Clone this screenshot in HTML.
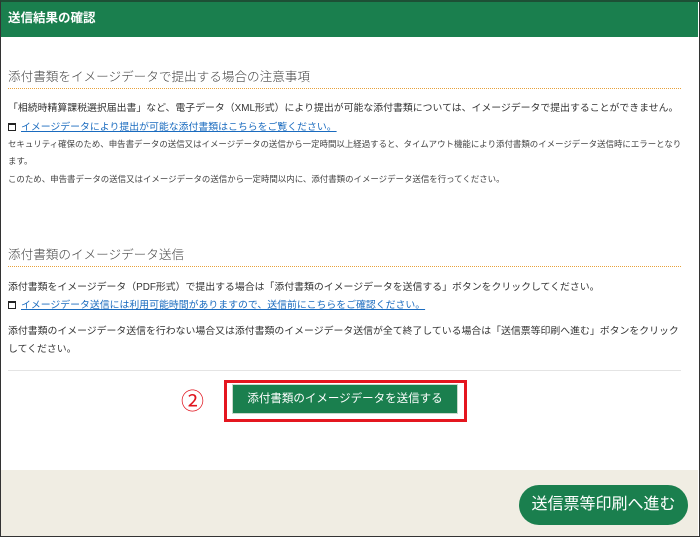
<!DOCTYPE html>
<html><head><meta charset="utf-8"><style>
*{margin:0;padding:0;box-sizing:border-box}
body{width:700px;height:537px;overflow:hidden;background:#fff;font-family:"Liberation Sans","Noto Sans CJK JP",sans-serif;color:#333;position:relative}
.frame{position:absolute;left:0;top:0;width:700px;height:537px;border:1px solid #333;border-top:2px solid #1d4f35}
.hdr{position:absolute;left:1px;top:2px;width:697px;height:35px;background:#1a7f4e;color:#fff;font-weight:bold;font-size:12.5px;line-height:33px;padding-left:7px}
.a{position:absolute;left:8px;white-space:nowrap}
.h{font-size:12.6px;color:#444;font-weight:300}
.dot{position:absolute;left:8px;width:673px;border-top:1px dotted #e8a13a}
.t{font-size:9.9px}
.s{font-size:8.45px;color:#444}
.lk{color:#1a6bbf;text-decoration:underline}
.ic{display:inline-block;width:8px;height:8px;border:1px solid #222;border-top-width:2px;margin-right:5px;vertical-align:-1px}
.bot{position:absolute;left:1px;top:470px;width:697px;height:66px;background:#f0ede3}
</style></head><body>
<div class="hdr">送信結果の確認</div>
<div class="a h" style="top:66px">添付書類をイメージデータで提出する場合の注意事項</div>
<div class="dot" style="top:88px"></div>
<div class="a t" style="top:100px">「相続時精算課税選択届出書」など、電子データ（XML形式）により提出が可能な添付書類については、イメージデータで提出することができません。</div>
<div class="a t" style="top:119px"><span class="ic"></span><span class="lk">イメージデータにより提出が可能な添付書類はこちらをご覧ください。</span></div>
<div class="a s" style="top:138px">セキュリティ確保のため、申告書データの送信又はイメージデータの送信から一定時間以上経過すると、タイムアウト機能により添付書類のイメージデータ送信時にエラーとなり</div>
<div class="a s" style="top:155px">ます。</div>
<div class="a s" style="top:173px">このため、申告書データの送信又はイメージデータの送信から一定時間以内に、添付書類のイメージデータ送信を行ってください。</div>
<div class="a h" style="top:244px">添付書類のイメージデータ送信</div>
<div class="dot" style="top:266px"></div>
<div class="a t" style="top:279px">添付書類をイメージデータ（PDF形式）で提出する場合は「添付書類のイメージデータを送信する」ボタンをクリックしてください。</div>
<div class="a t" style="top:297px"><span class="ic"></span><span class="lk">イメージデータ送信には利用可能時間がありますので、送信前にこちらをご確認ください。</span></div>
<div class="a t" style="top:323px">添付書類のイメージデータ送信を行わない場合又は添付書類のイメージデータ送信が全て終了している場合は「送信票等印刷へ進む」ボタンをクリック</div>
<div class="a t" style="top:341px">してください。</div>
<div style="position:absolute;left:8px;top:370px;width:673px;border-top:1px solid #e4e4e4"></div>
<div style="position:absolute;left:181px;top:382px;font-size:23px;color:#e0141e">②</div>
<div style="position:absolute;left:224px;top:380px;width:243px;height:42px;border:3px solid #e4161f"></div>
<div style="position:absolute;left:232px;top:384px;width:226px;height:30px;background:#1a7f4e;border:1px solid #c8d8cc;color:#fff;font-size:11.5px;line-height:28px;text-align:center">添付書類のイメージデータを送信する</div>
<div class="bot"></div>
<div style="position:absolute;left:519px;top:485px;width:169px;height:40px;background:#1a7f4e;border-radius:20px;color:#fff;font-size:16px;line-height:40px;text-align:center">送信票等印刷へ進む</div>
<div class="frame"></div>
</body></html>
